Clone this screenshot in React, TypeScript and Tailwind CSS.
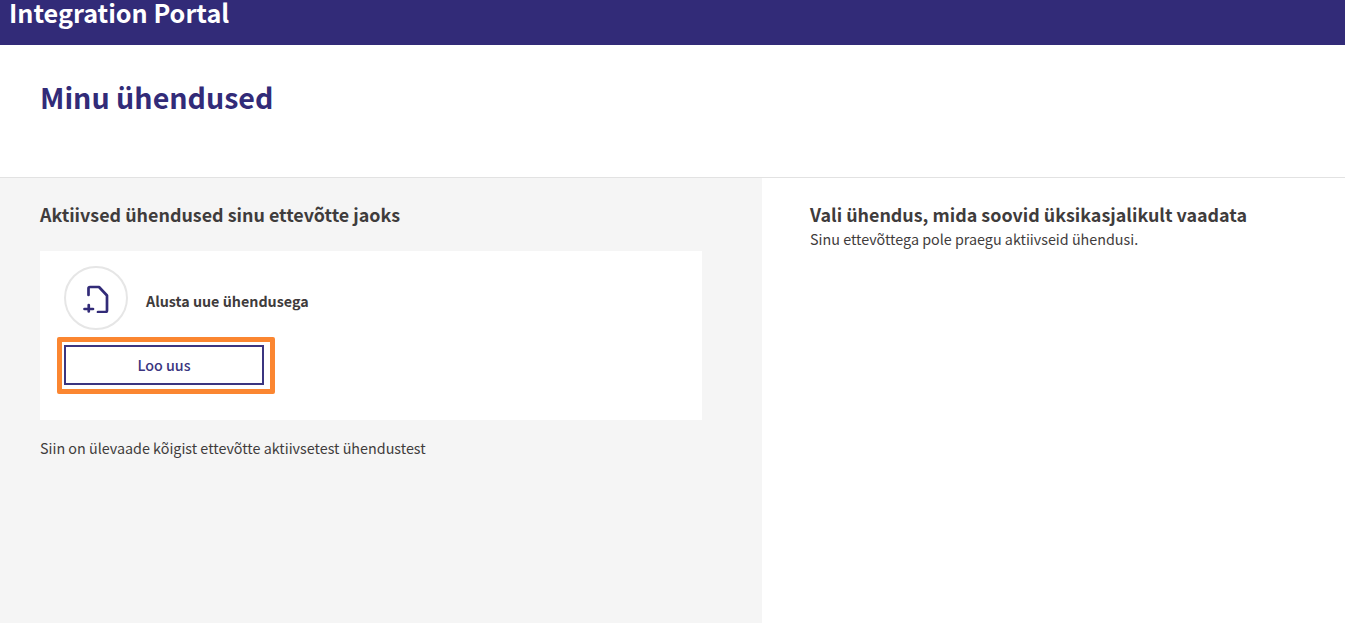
const font = { fontFamily: '"Noto Sans CJK SC", "Open Sans", sans-serif' };

function NewFileIcon() {
  return (
    <svg width="26" height="30" viewBox="0 0 26 30" fill="none" stroke="#322b78" strokeWidth="2.7" strokeLinecap="round" strokeLinejoin="round">
      <path d="M5.5 12V5.5A1.5 1.5 0 0 1 7 4H16l8 8.5V27.5A1.5 1.5 0 0 1 22.5 29H15" />
      <path d="M1.5 26h8.5M5.75 22v6.5" />
    </svg>
  );
}

export default function App() {
  return (
    <div className="h-[623px] w-[1345px] overflow-hidden bg-white text-[#3f3c3c]" style={font}>
      <header className="h-[45px] bg-[#322b78] pl-[9px]">
        <div className="text-[25.2px] leading-[25px] font-bold text-white">Integration Portal</div>
      </header>

      <div className="h-[133px] border-b border-[#e2e2e2] px-10 pt-[32px]">
        <h1 className="text-[28.6px] leading-[40px] font-bold text-[#322b78]">Minu ühendused</h1>
      </div>

      <div className="flex h-[445px]">
        <section className="w-[762px] bg-[#f5f5f5] pt-[24px] pr-[60px] pl-10">
          <h2 className="text-[17.9px] leading-[24px] font-bold">Aktiivsed ühendused sinu ettevõtte jaoks</h2>
          <div className="mt-[25px] h-[169px] bg-white pt-[15px] pl-6">
            <div className="flex items-center gap-[18px]">
              <div className="flex h-16 w-16 items-center justify-center rounded-full border-2 border-[#e6e6e6]">
                <NewFileIcon />
              </div>
              <span className="pt-[5px] text-[14.3px] leading-[20px] font-bold">Alusta uue ühendusega</span>
            </div>
            <div className="mt-[7px] -ml-[7px] w-[218px] rounded-[2px] border-[5px] border-[#fb8631] pt-[3px] pr-[6px] pb-[4px] pl-[2px]">
              <button className="block h-10 w-[200px] border-2 border-[#3b3580] bg-white text-[14.3px] font-medium text-[#3b3580]">
                Loo uus
              </button>
            </div>
          </div>
          <p className="mt-[17px] text-[14.33px] leading-[22px]">Siin on ülevaade kõigist ettevõtte aktiivsetest ühendustest</p>
        </section>

        <section className="flex-1 pt-[24px] pl-12">
          <h2 className="text-[17.9px] leading-[24px] font-bold">Vali ühendus, mida soovid üksikasjalikult vaadata</h2>
          <p className="pt-[3px] text-[14.33px] leading-[20px]">Sinu ettevõttega pole praegu aktiivseid ühendusi.</p>
        </section>
      </div>
    </div>
  );
}
